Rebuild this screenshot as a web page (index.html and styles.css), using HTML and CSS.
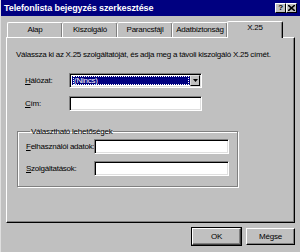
FILE: index.html
```html
<!DOCTYPE html>
<html lang="hu">

<head>
    <meta charset="UTF-8">
    <title>Telefonlista bejegyzés szerkesztése</title>
    <link rel="stylesheet" href="styles.css">
</head>

<body>
    <div class="window">
        <div class="titlebar">
            <span class="title">Telefonlista bejegyzés szerkesztése</span>
            <div class="title-buttons">
                <span class="tbtn">?</span>
                <span class="tbtn close">
                    <svg width="7" height="6" viewBox="0 0 7 6">
                        <path d="M0 0 L7 6 M7 0 L0 6" stroke="#000" stroke-width="1.6"/>
                    </svg>
                </span>
            </div>
        </div>

        <div class="tabs">
            <div class="tab">Alap</div>
            <div class="tab">Kiszolgáló</div>
            <div class="tab">Parancsfájl</div>
            <div class="tab">Adatbiztonság</div>
            <div class="tab active">X.25</div>
        </div>

        <div class="panel">
            <p class="intro">Válassza ki az X.25 szolgáltatóját, és adja meg a távoli kiszolgáló X.25 címét.</p>

            <div class="rows">
                <label><u>H</u>álózat:</label>
                <div class="select">
                    <span class="select-value"><span class="focus">(Nincs)</span></span>
                    <span class="arrow">
                        <svg width="5" height="3" viewBox="0 0 5 3"><path d="M0 0 H5 L2.5 3 Z" fill="#000"/></svg>
                    </span>
                </div>
                <label><u>C</u>ím:</label>
                <div class="field"></div>
            </div>

            <fieldset class="group">
                <legend>Választható lehetőségek</legend>
                <div class="group-rows">
                    <label><u>F</u>elhasználói adatok:</label>
                    <div class="field"></div>
                    <label><u>S</u>zolgáltatások:</label>
                    <div class="field"></div>
                </div>
            </fieldset>
        </div>

        <div class="buttons">
            <button class="btn default">OK</button>
            <button class="btn">Mégse</button>
        </div>
    </div>
</body>

</html>
```

FILE: styles.css
```css
* {
    margin: 0;
    padding: 0;
    box-sizing: border-box;
}

body {
    width: 300px;
    height: 252px;
    overflow: hidden;
    background: #c0c0c0;
    font-family: "Liberation Sans", Arial, sans-serif;
    font-size: 8px;
    letter-spacing: -0.25px;
    color: #000;
}

.window {
    width: 300px;
    height: 252px;
    background: #c0c0c0;
    border-left: 1px solid #dfdfdf;
}

.titlebar {
    height: 16px;
    background: #000080;
    display: flex;
    align-items: center;
    justify-content: space-between;
    padding: 0 3px 0 3px;
}

.title {
    color: #fff;
    font-weight: bold;
    font-size: 9px;
    letter-spacing: -0.1px;
}

.title-buttons {
    display: flex;
}

.tbtn {
    width: 11px;
    height: 10px;
    background: #c0c0c0;
    border-top: 1px solid #fff;
    border-left: 1px solid #fff;
    border-right: 1px solid #000;
    border-bottom: 1px solid #000;
    display: flex;
    align-items: center;
    justify-content: center;
    font-weight: bold;
    font-size: 8px;
    line-height: 1;
}

.tabs {
    display: flex;
    margin: 5px 0 0 6px;
    height: 16px;
    align-items: flex-end;
}

.tab {
    width: 56px;
    height: 15px;
    border-top: 1px solid #fff;
    border-left: 1px solid #fff;
    border-right: 1px solid #000;
    box-shadow: inset -1px 0 #808080;
    border-radius: 2px 2px 0 0;
    text-align: center;
    line-height: 14px;
    margin-right: -1px;
}

.tab.active {
    height: 17px;
    margin-bottom: -1px;
    position: relative;
    z-index: 1;
    background: #c0c0c0;
    line-height: 12px;
}

.panel {
    margin-left: 5px;
    width: 289px;
    height: 186px;
    border-top: 1px solid #fff;
    border-left: 1px solid #fff;
    border-right: 1px solid #000;
    border-bottom: 1px solid #000;
    box-shadow: inset -1px -1px #808080;
    padding: 12px 0 0 9px;
}

.intro {
    line-height: 10px;
    white-space: nowrap;
}

label {
    white-space: nowrap;
}

.rows {
    display: grid;
    grid-template-columns: 44px 133px;
    row-gap: 8px;
    align-items: center;
    margin: 13px 0 0 9px;
}

.select,
.field {
    height: 15px;
    background: #fff;
    border-top: 1px solid #808080;
    border-left: 1px solid #808080;
    border-right: 1px solid #fff;
    border-bottom: 1px solid #fff;
    box-shadow: inset 1px 1px #000, inset -1px -1px #dfdfdf;
}

.select {
    display: flex;
    padding: 2px;
}

.select-value {
    flex: 1;
    background: #000080;
    color: #fff;
    padding: 0 1px;
    line-height: 9px;
}

.focus {
    display: block;
    height: 9px;
    outline: 1px dotted #fff;
    outline-offset: -1px;
    padding-left: 1px;
}

.arrow {
    width: 10px;
    background: #c0c0c0;
    border-top: 1px solid #dfdfdf;
    border-left: 1px solid #dfdfdf;
    border-right: 1px solid #000;
    border-bottom: 1px solid #000;
    display: flex;
    align-items: center;
    justify-content: center;
    margin: -1px -1px -1px 0;
}

.group {
    margin: 16px 0 0 1px;
    width: 221px;
    height: 60px;
    border: 1px solid #808080;
    box-shadow: 1px 1px #fff, inset 1px 1px #fff;
    padding: 3px 0 0 8px;
}

.group legend {
    padding: 0 1px;
    margin-left: 4px;
    line-height: 9px;
}

.group-rows {
    display: grid;
    grid-template-columns: 68px 135px;
    row-gap: 7px;
    align-items: center;
}

.buttons {
    display: flex;
    justify-content: flex-end;
    gap: 5px;
    padding: 5px 5px 0 0;
}

.btn {
    width: 49px;
    height: 17px;
    font-family: inherit;
    font-size: 8px;
    letter-spacing: -0.2px;
    background: #c0c0c0;
    border-top: 1px solid #fff;
    border-left: 1px solid #fff;
    border-right: 1px solid #000;
    border-bottom: 1px solid #000;
    box-shadow: inset -1px -1px #808080;
}

.btn.default {
    outline: 1px solid #000;
    outline-offset: 0;
    border-color: #fff #404040 #404040 #fff;
}
```
